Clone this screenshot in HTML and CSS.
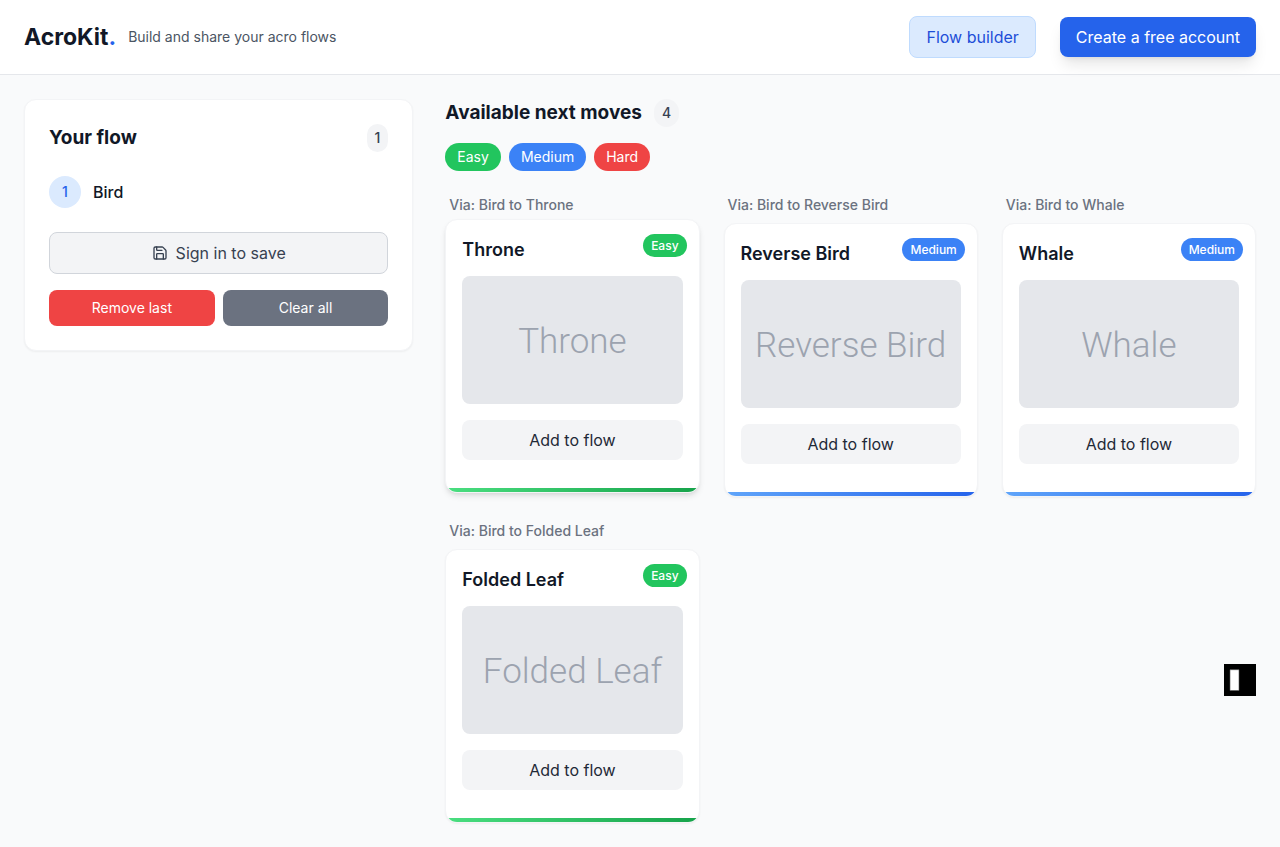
FILE: index.html
```html
<!DOCTYPE html>
<html lang="en">
<head>
<meta charset="utf-8">
<meta name="viewport" content="width=device-width, initial-scale=1">
<title>AcroKit</title>
<link rel="stylesheet" href="styles.css">
</head>
<body>
<header class="topbar">
  <div class="brand">
    <a class="logo" href="#">AcroKit<span class="logo-dot">.</span></a>
    <p class="tagline">Build and share your acro flows</p>
  </div>
  <nav class="nav">
    <a class="nav-link" href="#">Flow builder</a>
    <button class="signup" type="button">Create a free account</button>
  </nav>
</header>
<main class="layout">
  <aside class="panel">
    <div class="panel-head">
      <h2 class="heading">Your flow</h2>
      <span class="count">1</span>
    </div>
    <ol class="flow">
      <li class="flow-item"><span class="step">1</span><span class="move">Bird</span></li>
    </ol>
    <button class="save" type="button">
      <svg class="save-icon" viewBox="0 0 24 24" fill="none" stroke="currentColor" stroke-width="2" stroke-linecap="round" stroke-linejoin="round" aria-hidden="true"><path d="M15.2 3a2 2 0 0 1 1.400.6l3.800 3.800a2 2 0 0 1 .6 1.400V19a2 2 0 0 1-2 2H5a2 2 0 0 1-2-2V5a2 2 0 0 1 2-2z"/><path d="M17 21v-7a1 1 0 0 0-1-1H8a1 1 0 0 0-1 1v7"/><path d="M7 3v4a1 1 0 0 0 1 1h7"/></svg>
      Sign in to save
    </button>
    <div class="actions">
      <button class="action remove" type="button">Remove last</button>
      <button class="action clear" type="button">Clear all</button>
    </div>
  </aside>
  <section class="moves">
    <div class="moves-head">
      <h2 class="heading">Available next moves</h2>
      <span class="count">4</span>
    </div>
    <div class="filters">
      <button class="filter easy" type="button">Easy</button>
      <button class="filter medium" type="button">Medium</button>
      <button class="filter hard" type="button">Hard</button>
    </div>
    <div class="cards">
      <div class="entry">
        <p class="via">Via: Bird to Throne</p>
        <article class="card raised">
          <h3 class="card-title">Throne</h3>
          <span class="badge easy">Easy</span>
          <div class="preview">Throne</div>
          <button class="add" type="button">Add to flow</button>
          <div class="bar bar-easy"></div>
        </article>
      </div>
      <div class="entry">
        <p class="via">Via: Bird to Reverse Bird</p>
        <article class="card">
          <h3 class="card-title">Reverse Bird</h3>
          <span class="badge medium">Medium</span>
          <div class="preview">Reverse Bird</div>
          <button class="add" type="button">Add to flow</button>
          <div class="bar bar-medium"></div>
        </article>
      </div>
      <div class="entry">
        <p class="via">Via: Bird to Whale</p>
        <article class="card">
          <h3 class="card-title">Whale</h3>
          <span class="badge medium">Medium</span>
          <div class="preview">Whale</div>
          <button class="add" type="button">Add to flow</button>
          <div class="bar bar-medium"></div>
        </article>
      </div>
      <div class="entry">
        <p class="via">Via: Bird to Folded Leaf</p>
        <article class="card">
          <h3 class="card-title">Folded Leaf</h3>
          <span class="badge easy">Easy</span>
          <div class="preview">Folded Leaf</div>
          <button class="add" type="button">Add to flow</button>
          <div class="bar bar-easy"></div>
        </article>
      </div>
    </div>
  </section>
</main>
<button class="dock" type="button" aria-label="Toggle side panel">
  <svg viewBox="0 0 32 32" aria-hidden="true"><path fill="#000" d="M0 0h32v32H0z"/><path fill="#fff" stroke="#555" stroke-width=".6" d="M6 5.700h9v20.800H6z"/></svg>
</button>
</body>
</html>
```
FILE: styles.css
```css
*, *::before, *::after { box-sizing: border-box; }
body, h2, h3, p, ol { margin: 0; padding: 0; }
body {
  min-height: 100vh;
  background: #f9fafb;
  color: #111827;
  font-family: Inter, "Liberation Sans", sans-serif;
  font-size: 16px;
  line-height: 24px;
}
button { border: 0; padding: 0; font: inherit; cursor: pointer; }
a { text-decoration: none; }

.topbar {
  display: flex;
  align-items: center;
  justify-content: space-between;
  padding: 16px 24px;
  background: #fff;
  border-bottom: 1px solid #e5e7eb;
}
.brand { display: flex; align-items: center; gap: 12px; }
.logo { color: #111827; font-size: 23px; line-height: 32px; font-weight: 700; }
.logo-dot { color: #2563eb; }
.tagline { color: #4b5563; font-size: 14px; line-height: 20px; }
.nav { display: flex; align-items: center; gap: 24px; }
.nav-link, .signup, .save, .add {
  padding: 8px 16px;
  border-radius: 8px;
}
.nav-link {
  border: 1px solid #bfdbfe;
  background: #dbeafe;
  color: #1d4ed8;
}
.signup {
  background: #2563eb;
  color: #fff;
  box-shadow: 0 10px 15px -3px rgb(0 0 0 / 10%), 0 4px 6px -4px rgb(0 0 0 / 10%);
}

.layout {
  display: grid;
  grid-template-columns: repeat(3, minmax(0, 1fr));
  gap: 32px;
  align-items: start;
  padding: 24px;
}
.panel {
  padding: 24px;
  border: 1px solid #f3f4f6;
  border-radius: 12px;
  background: #fff;
  box-shadow: 0 1px 2px rgb(0 0 0 / 5%);
}
.panel-head { display: flex; align-items: center; justify-content: space-between; }
.heading { font-size: 19px; line-height: 28px; font-weight: 700; }
.count {
  padding: 4px 8px;
  border-radius: 14px;
  background: #f3f4f6;
  color: #374151;
  font-size: 14px;
  line-height: 20px;
  font-weight: 500;
}
.flow { margin: 24px 0; list-style: none; }
.flow-item { display: flex; align-items: center; gap: 12px; }
.step {
  display: flex;
  align-items: center;
  justify-content: center;
  width: 32px;
  height: 32px;
  border-radius: 50%;
  background: #dbeafe;
  color: #2563eb;
  font-size: 14px;
  font-weight: 500;
}
.move { font-weight: 500; }
.save {
  display: flex;
  align-items: center;
  justify-content: center;
  gap: 8px;
  width: 100%;
  border: 1px solid #d1d5db;
  background: #f3f4f6;
  color: #374151;
}
.save-icon { width: 16px; height: 16px; }
.actions { display: grid; grid-template-columns: 1fr 1fr; gap: 8px; margin-top: 16px; }
.action { padding: 8px 16px; border-radius: 8px; color: #fff; font-size: 14px; line-height: 20px; }
.remove { background: #ef4444; }
.clear { background: #6b7280; }

.moves { grid-column: span 2; }
.moves-head { display: flex; align-items: center; gap: 12px; }
.filters { display: flex; gap: 8px; margin: 16px 0 24px; }
.filter {
  padding: 4px 12px;
  border-radius: 14px;
  color: #fff;
  font-size: 14px;
  line-height: 20px;
}
.easy { background: #22c55e; }
.medium { background: #3b82f6; }
.hard { background: #ef4444; }
.cards { display: grid; grid-template-columns: repeat(3, minmax(0, 1fr)); gap: 24px; }
.via {
  margin-bottom: 8px;
  padding: 0 4px;
  color: #6b7280;
  font-size: 14px;
  line-height: 20px;
  font-weight: 500;
}
.card {
  position: relative;
  overflow: hidden;
  padding: 16px 16px 32px;
  border: 1px solid #f3f4f6;
  border-radius: 12px;
  background: #fff;
  box-shadow: 0 1px 2px rgb(0 0 0 / 5%);
}
.raised {
  transform: translateY(-4px);
  box-shadow: 0 4px 6px -1px rgb(0 0 0 / 10%), 0 2px 4px -2px rgb(0 0 0 / 10%);
}
.card-title { font-size: 18px; line-height: 28px; font-weight: 600; }
.badge {
  position: absolute;
  top: 14px;
  right: 12px;
  padding: 4px 8px;
  border-radius: 12px;
  color: #fff;
  font-size: 12px;
  line-height: 15px;
  font-weight: 500;
}
.preview {
  display: flex;
  align-items: center;
  justify-content: center;
  height: 128px;
  margin: 12px 0 16px;
  padding-top: 4px;
  border-radius: 8px;
  background: #e5e7eb;
  color: #9ca3af;
  font-family: Roboto, Inter, sans-serif;
  font-size: 35px;
  line-height: 40px;
  font-weight: 300;
  white-space: nowrap;
}
.add {
  display: block;
  width: 100%;
  background: #f3f4f6;
  color: #1f2937;
}
.bar { position: absolute; left: 0; right: 0; bottom: 0; height: 4px; }
.bar-easy { background: linear-gradient(to right, #4ade80, #16a34a); }
.bar-medium { background: linear-gradient(to right, #60a5fa, #2563eb); }

.dock {
  position: fixed;
  right: 24px;
  top: 664px;
  width: 32px;
  height: 32px;
  background: none;
}
.dock svg { display: block; }
```
